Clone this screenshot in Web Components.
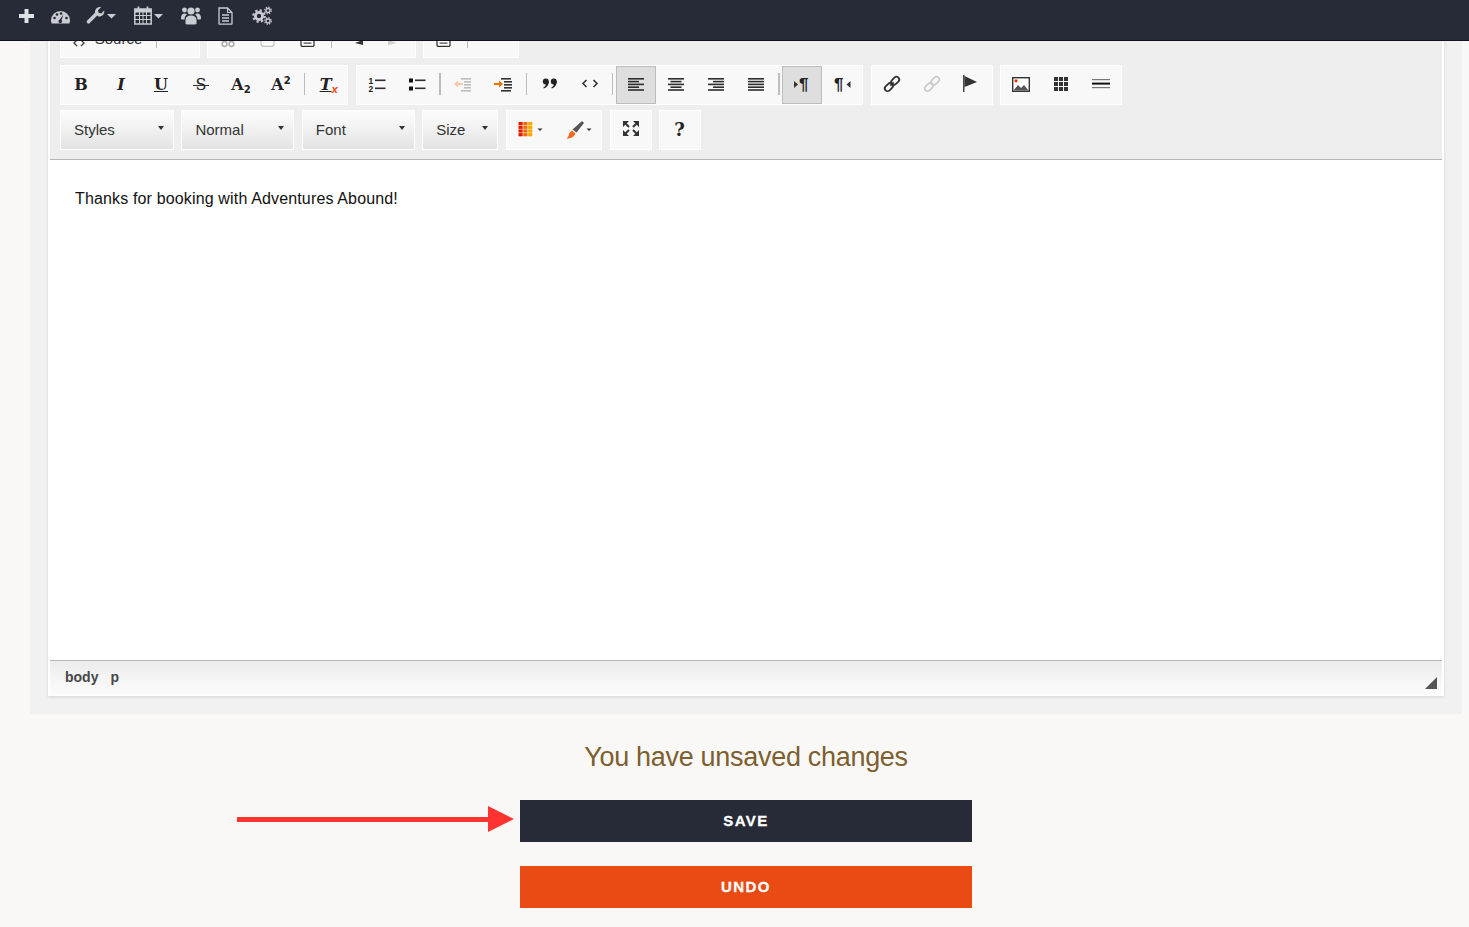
<!DOCTYPE html>
<html>
<head>
<meta charset="utf-8">
<title>Email editor</title>
<style>
  html, body { margin: 0; height: 100%; overflow: hidden; background: #faf8f6; font-family: "Liberation Sans", Arial, sans-serif; }
</style>
</head>
<body>
<admin-topbar>
  <top-icon name="plus" w="15"></top-icon>
  <top-icon name="gauge" w="19"></top-icon>
  <top-icon name="wrench" w="30"></top-icon>
  <top-icon name="calendar" w="30"></top-icon>
  <top-icon name="users" w="20"></top-icon>
  <top-icon name="doc" w="15"></top-icon>
  <top-icon name="cogs" w="22"></top-icon>
</admin-topbar>

<editor-panel>
  <rich-editor>
    <ck-toolbar>
      <ck-row kind="tight">
        <ck-group width="140">
          <ck-btn width="92"><ck-icon name="source"></ck-icon><ck-label>Source</ck-label></ck-btn><ck-sep></ck-sep>
        </ck-group>
        <ck-group width="209">
          <ck-btn><ck-icon name="cut"></ck-icon></ck-btn>
          <ck-btn><ck-icon name="copy"></ck-icon></ck-btn>
          <ck-btn><ck-icon name="paste"></ck-icon></ck-btn><ck-sep></ck-sep>
          <ck-btn><ck-icon name="undo"></ck-icon></ck-btn>
          <ck-btn><ck-icon name="redo"></ck-icon></ck-btn>
        </ck-group>
        <ck-group width="96">
          <ck-btn><ck-icon name="paste"></ck-icon></ck-btn><ck-sep></ck-sep>
        </ck-group>
      </ck-row>

      <ck-row>
        <ck-group>
          <ck-btn><ck-glyph kind="b">B</ck-glyph></ck-btn>
          <ck-btn><ck-glyph kind="i">I</ck-glyph></ck-btn>
          <ck-btn><ck-glyph kind="u">U</ck-glyph></ck-btn>
          <ck-btn><ck-glyph kind="s">S</ck-glyph></ck-btn>
          <ck-btn><ck-glyph kind="b">A<sub>2</sub></ck-glyph></ck-btn>
          <ck-btn><ck-glyph kind="b">A<sup>2</sup></ck-glyph></ck-btn><ck-sep></ck-sep>
          <ck-btn><ck-glyph kind="tx"><u>T</u><sub>x</sub></ck-glyph></ck-btn>
        </ck-group>
        <ck-group>
          <ck-btn><ck-icon name="ol"></ck-icon></ck-btn>
          <ck-btn><ck-icon name="ul"></ck-icon></ck-btn><ck-sep></ck-sep>
          <ck-btn><ck-icon name="outdent"></ck-icon></ck-btn>
          <ck-btn><ck-icon name="indent"></ck-icon></ck-btn><ck-sep></ck-sep>
          <ck-btn><ck-icon name="quote"></ck-icon></ck-btn>
          <ck-btn><ck-icon name="code"></ck-icon></ck-btn><ck-sep></ck-sep>
          <ck-btn active><ck-icon name="left"></ck-icon></ck-btn>
          <ck-btn><ck-icon name="center"></ck-icon></ck-btn>
          <ck-btn><ck-icon name="right"></ck-icon></ck-btn>
          <ck-btn><ck-icon name="justify"></ck-icon></ck-btn><ck-sep></ck-sep>
          <ck-btn active><ck-icon name="ltr"></ck-icon></ck-btn>
          <ck-btn><ck-icon name="rtl"></ck-icon></ck-btn>
        </ck-group>
        <ck-group>
          <ck-btn><ck-icon name="link"></ck-icon></ck-btn>
          <ck-btn><ck-icon name="unlink"></ck-icon></ck-btn>
          <ck-btn><ck-icon name="flag"></ck-icon></ck-btn>
        </ck-group>
        <ck-group>
          <ck-btn><ck-icon name="image"></ck-icon></ck-btn>
          <ck-btn><ck-icon name="table"></ck-icon></ck-btn>
          <ck-btn><ck-icon name="rule"></ck-icon></ck-btn>
        </ck-group>
      </ck-row>

      <ck-row kind="combos">
        <ck-combo width="114">Styles</ck-combo>
        <ck-combo width="113">Normal</ck-combo>
        <ck-combo width="113">Font</ck-combo>
        <ck-combo width="76">Size</ck-combo>
        <ck-group width="96.6">
          <ck-btn width="47"><ck-icon name="textcolor" w="28"></ck-icon></ck-btn>
          <ck-btn width="47"><ck-icon name="brush" w="28"></ck-icon></ck-btn>
        </ck-group>
        <ck-group width="42"><ck-btn><ck-icon name="maximize"></ck-icon></ck-btn></ck-group>
        <ck-group width="42"><ck-btn><ck-glyph kind="help">?</ck-glyph></ck-btn></ck-group>
      </ck-row>
    </ck-toolbar>
    <ck-content>Thanks for booking with Adventures Abound!</ck-content>
    <ck-status><span>body</span><span>p</span></ck-status>
  </rich-editor>
</editor-panel>

<save-footer>
  <span slot="message">You have unsaved changes</span>
  <save-button tone="dark" pointer>SAVE</save-button>
  <save-button tone="orange">UNDO</save-button>
</save-footer>

<script>
const DARK = "#2d2d2d";
const line = (x, y, w, h, c) => `<rect x="${x}" y="${y}" width="${w}" height="${h}" fill="${c || DARK}"/>`;
const lines = (rows, c) => rows.map(r => line(r[0], r[1], r[2], r.length > 3 ? r[3] : 1.6, c)).join("");
const ROWS = [4, 6.8, 9.6, 12.4, 15.2];
const align = xs => lines(ROWS.map((y, i) => [xs[i % 2][0], y, xs[i % 2][1]]));

// toolbar icons, all on a 20x20 box unless the element says otherwise
const CK_ICONS = {
  source: `<path d="M5 13l-3 3 3 3M9 13l3 3-3 3" fill="none" stroke="#444" stroke-width="1.4"/>`,
  cut: `<circle cx="6.500" cy="17" r="2.400" fill="none" stroke="#aaa" stroke-width="1.500"/><circle cx="13.500" cy="17" r="2.400" fill="none" stroke="#aaa" stroke-width="1.500"/>`,
  copy: `<rect x="3" y="5" width="13" height="14.300" rx="2.500" fill="none" stroke="#c4c4c4" stroke-width="1.300"/>`,
  paste: `<rect x="3" y="6" width="13" height="13.300" rx="1" fill="#fff" stroke="#333" stroke-width="1.300"/>${lines([[5.500,12.500,8,1.200],[5.500,15.500,8,1.200]], "#444")}`,
  undo: `<path d="M11 16l8-3v5z" fill="#333"/>`,
  redo: `<path d="M13 16l-9-3v5z" fill="#cfcfcf"/>`,
  ol: `<text x="1.500" y="9.500" font-family="Liberation Sans" font-weight="700" font-size="8.500" fill="#222">1</text><text x="1.500" y="18" font-family="Liberation Sans" font-weight="700" font-size="8.500" fill="#222">2</text>${lines([[8,5.500,10.500],[8,13.500,10.500]])}`,
  ul: `${line(2,4.500,4,4,"#111")}${line(2,12.500,4,4,"#111")}${lines([[8,5.500,10.500],[8,13.500,10.500]])}`,
  outdent: `<path d="M1 10l4-3.500V9h5v2H5v2.500z" fill="#f9c8a8"/>${lines([[8,4,10],[11,7,7],[11,10,7],[11,13,7],[8,16,10]], "#bdbdbd")}`,
  indent: `<path d="M10 10L6 6.500V9H1v2h5v2.500z" fill="#f07000"/>${lines([[8,4,10],[11,7,8],[11,10,8],[11,13,8],[8,16,10]], "#333")}`,
  quote: `<g fill="#222"><circle cx="5.800" cy="7.500" r="3"/><path d="M8.800 7.500c0 3.500-2 6-5 7l-.5-1c2-1 2.700-2.500 2.700-4z"/><circle cx="13.800" cy="7.500" r="3"/><path d="M16.800 7.500c0 3.500-2 6-5 7l-.5-1c2-1 2.700-2.500 2.700-4z"/></g>`,
  code: `<path d="M6.500 6L3 9.500l3.500 3.500M13.500 6L17 9.500 13.500 13" fill="none" stroke="#333" stroke-width="1.600"/>`,
  left: align([[2,16],[2,11]]),
  center: align([[2,16],[4.500,11]]),
  right: align([[2,16],[7,11]]),
  justify: align([[2,16],[2,16]]),
  ltr: `<path d="M2 7l4 3.500-4 3.500z" fill="#333"/><text x="7" y="16" font-family="Liberation Sans" font-weight="700" font-size="17" fill="#222">¶</text>`,
  rtl: `<path d="M18.500 7l-4 3.500 4 3.500z" fill="#333"/><text x="2" y="16" font-family="Liberation Sans" font-weight="700" font-size="17" fill="#222">¶</text>`,
  link: `<g fill="none" stroke="#333" stroke-width="1.800"><rect x="8.700" y="4" width="9" height="5.600" rx="2.800" transform="rotate(-45 13.200 6.800)"/><rect x="2.300" y="10.400" width="9" height="5.600" rx="2.800" transform="rotate(-45 6.800 13.200)"/><path d="M8.300 11.700l3.400-3.400"/></g>`,
  unlink: `<g fill="none" stroke="#cbcbcb" stroke-width="1.800"><rect x="8.700" y="4" width="9" height="5.600" rx="2.800" transform="rotate(-45 13.200 6.800)"/><rect x="2.300" y="10.400" width="9" height="5.600" rx="2.800" transform="rotate(-45 6.800 13.200)"/></g>`,
  flag: `${line(1,1,1.500,17,"#444")}<path d="M2.500 2L15 8 2.500 13z" fill="#333"/>`,
  image: `<rect x="1.700" y="3.700" width="16.600" height="13.600" fill="#fff" stroke="#333" stroke-width="1.400"/><circle cx="5" cy="6.800" r="1.600" fill="#f33000"/><path d="M2.500 16.500l4.500-5.500 3 3 3-3 4.500 5.500z" fill="#555"/>`,
  table: [3,8,13].map(x => [3,8,13].map(y => line(x, y, 4, 4, "#333")).join("")).join(""),
  rule: `${line(1,5,18,1.200,"#777")}${line(1,8.600,18,2,"#111")}${line(1,13,18,1.200,"#777")}`,
  textcolor: [0,1,2,3].map(r => [0,1,2].map(c => line(2.500 + c * 4.800, 3 + r * 3.700, 4.200, 3.200, ["#e01b00","#f06a00","#f9a800"][c])).join("")).join("") + `<path d="M21.500 9.500h5l-2.500 2.600z" fill="#333"/>`,
  brush: `<path d="M19 2l2 2-7.500 9.500-4-3z" fill="#555"/><path d="M9 11.500l3.500 3c-1 3-4.500 5-9 5.300 2-1.500 2-3.800 3-5.800.5-1 1.500-1.800 2.500-2.500z" fill="#f26a1b"/><path d="M23.500 9.500h5l-2.500 2.600z" fill="#333"/>`,
  maximize: `<g fill="#333"><path d="M2 2h6L2 8zM18 2v6l-6-6zM2 17v-6l6 6zM18 17h-6l6-6z"/></g><path d="M4.500 4.500L8 8M15.500 4.500L12 8M4.500 14.500L8 11M15.500 14.500L12 11" stroke="#333" stroke-width="2"/>`
};

// dark top bar icons
const ICON_TINT = "#c9ccd2", BAR = "#272b37";
const caret = x => `<path d="M${x} 14h9l-4.500 4.500z" fill="${ICON_TINT}"/>`;
const TOP_ICONS = {
  plus: `<path d="M5.500 9h4v5h5.500v4H9.500v5h-4v-5H0v-4h5.500z" fill="#dfe1e4"/>`,
  gauge: `<path d="M0 20.500a9.500 9.500 0 0 1 19 0c0 1-.3 2.200-.7 3H.7C.3 22.700 0 21.500 0 20.500z" fill="${ICON_TINT}"/><circle cx="3.500" cy="18" r="1.300" fill="${BAR}"/><circle cx="6" cy="14.500" r="1.300" fill="${BAR}"/><circle cx="10" cy="13.500" r="1.300" fill="${BAR}"/><circle cx="15.500" cy="18" r="1.300" fill="${BAR}"/><path d="M12.500 14.500l-2 5.500a1.800 1.800 0 1 1-2-.3z" fill="${BAR}"/>`,
  wrench: `<path d="M1.500 21.800L9.500 13.800" stroke="${ICON_TINT}" stroke-width="3.600" stroke-linecap="round"/><path d="M8 13c-.6-3.500 2.500-6.500 6-5.800l-3 3 .6 2.600 2.600.6 3-3c.7 3.500-2.300 6.600-5.800 6z" fill="${ICON_TINT}"/>${caret(20)}`,
  calendar: `<rect x=".8" y="9" width="16.400" height="15" fill="none" stroke="${ICON_TINT}" stroke-width="1.500"/><path d="M1 9h16v3.500H1z" fill="${ICON_TINT}"/><path d="M5.500 12v12M9 12v12M12.500 12v12M1 15.500h16M1 19.500h16" stroke="${ICON_TINT}" stroke-width="1"/><path d="M4.500 6.500v3.500M13.500 6.500v3.500" stroke="${ICON_TINT}" stroke-width="1.800"/>${caret(20)}`,
  users: `<g fill="${ICON_TINT}"><circle cx="10" cy="11" r="3.600"/><circle cx="3.500" cy="10" r="2.400"/><circle cx="16.500" cy="10" r="2.400"/><path d="M4.500 24v-4c0-3 2-4.500 5.500-4.500s5.500 1.500 5.500 4.500v4c-1 .7-10 .7-11 0z"/><path d="M0 18c0-3 1.500-4.500 3.500-4.500 1 0 1.800 .3 2.400 .9-1.500 1-2.400 2.700-2.400 5.100H1c-.7 0-1-.6-1-1.500zM20 18c0-3-1.500-4.500-3.500-4.500-1 0-1.800 .3-2.400 .9 1.500 1 2.400 2.700 2.400 5.100H19c.7 0 1-.6 1-1.500z"/></g>`,
  doc: `<path d="M1 8h8.500L14 12.500V23.500a.7 .7 0 0 1-.7 .7H1.700a.7 .7 0 0 1-.7-.7z" fill="none" stroke="${ICON_TINT}" stroke-width="1.300"/><path d="M9.500 8v4.500H14" fill="none" stroke="${ICON_TINT}" stroke-width="1.100"/><path d="M4 15h7M4 18h7M4 21h7" stroke="${ICON_TINT}" stroke-width="1.300"/>`,
  cogs: `<g fill="none" stroke="${ICON_TINT}"><circle cx="9" cy="16" r="3.600" stroke-width="2.800"/><circle cx="9" cy="16" r="5.800" stroke-width="2" stroke-dasharray="2.300 2.250"/><circle cx="18" cy="10.500" r="2" stroke-width="1.300"/><circle cx="18" cy="10.500" r="3.300" stroke-width="1.300" stroke-dasharray="1.300 1.300"/><circle cx="18" cy="21" r="2" stroke-width="1.300"/><circle cx="18" cy="21" r="3.300" stroke-width="1.300" stroke-dasharray="1.300 1.300"/></g>`
};

// small helper so every element below stays a few lines long
function define(tag, css, html, setup) {
  customElements.define(tag, class extends HTMLElement {
    constructor() {
      super();
      this.attachShadow({ mode: "open" });
    }
    connectedCallback() {
      this.shadowRoot.innerHTML = `<style>${css}</style>${typeof html === "function" ? html(this) : html}`;
      if (setup) setup(this);
    }
  });
}

define("admin-topbar", `
  :host { position: fixed; top: 0; left: 0; right: 0; height: 40px; z-index: 5; display: flex; align-items: flex-start; gap: 17px; padding-left: 19px; background: #272b37; border-bottom: 1px solid #11131a; }
`, `<slot></slot>`);

define("top-icon", `:host { display: block; height: 30px; } svg { display: block; overflow: visible; }`,
  el => `<svg width="${el.getAttribute("w")}" height="30" viewBox="0 0 ${el.getAttribute("w")} 30">${TOP_ICONS[el.getAttribute("name")]}</svg>`);

define("editor-panel", `
  :host { display: block; margin: 0 7px 0 30px; padding: 0 18px 18px; background: #f1f1f1; }
`, `<slot></slot>`);

define("rich-editor", `
  :host { display: block; background: #fff; border: solid #fff; border-width: 0 2px 1px; box-shadow: 0 1px 3px rgba(0,0,0,.12); }
`, `<slot></slot>`);

define("ck-toolbar", `
  :host { display: flex; flex-direction: column; gap: 5px; padding: 18px 10px 9px; background: #eee; border-bottom: 1px solid #b6b6b6; }
`, `<slot></slot>`);

define("ck-row", `
  :host { display: flex; gap: 7.6px; }
  :host([kind="tight"]) { margin-bottom: 2px; gap: 7px; }
  :host([kind="combos"]) { gap: 7.4px; }
`, `<slot></slot>`);

define("ck-group", `
  :host { display: flex; box-sizing: border-box; height: 40px; background: #f8f8f8; border: 1px solid #fff; }
`, `<slot></slot>`, el => { if (el.getAttribute("width")) el.style.width = el.getAttribute("width") + "px"; });

define("ck-btn", `
  :host { display: flex; align-items: center; justify-content: center; gap: 5px; box-sizing: border-box; flex: none; width: 40px; height: 38px; }
  :host([active]) { background: #dedede; box-shadow: inset 0 0 0 1px #bcbcbc; }
`, `<slot></slot>`, el => { if (el.getAttribute("width")) el.style.width = el.getAttribute("width") + "px"; });

define("ck-sep", `
  :host { display: block; flex: none; width: 1.3px; height: 22px; margin: 7px 2.52px 0; background: #bcbcbc; }
`, ``);

define("ck-icon", `:host { display: block; line-height: 0; margin-bottom: 2px; } svg { display: block; overflow: visible; }`,
  el => {
    const w = el.getAttribute("w") || 20;
    return `<svg width="${w}" height="20" viewBox="0 0 ${w} 20">${CK_ICONS[el.getAttribute("name")]}</svg>`;
  });

define("ck-label", `:host { font-size: 15px; color: #333; margin: 1px 0 0 -2px; }`, `<slot></slot>`);

// B I U S and friends are real letters in a slab serif
define("ck-glyph", `
  :host { position: relative; display: block; font: 700 16px "DejaVu Serif", "Liberation Serif", serif; color: #222; line-height: 20px; white-space: nowrap; }
  :host([kind="i"]) { font-style: italic; }
  :host([kind="u"]) { text-decoration: underline; }
  :host([kind="s"]) { font-weight: 400; }
  :host([kind="s"])::after { content: ""; position: absolute; left: -3px; right: -3px; top: 10px; height: 1.3px; background: #333; }
  :host([kind="tx"]) { font-style: italic; margin-left: 3px; }
  :host([kind="help"]) { font-size: 18px; margin-right: 1px; }
  ::slotted(sub), ::slotted(sup) { font: 700 10px "DejaVu Sans", sans-serif; line-height: 0; }
  ::slotted(sup) { vertical-align: 6px; }
  ::slotted(sub) { vertical-align: -3px; }
  :host([kind="tx"]) ::slotted(sub) { color: #f0552a; font-style: italic; }
`, `<slot></slot>`);

define("ck-combo", `
  :host { display: flex; align-items: center; box-sizing: border-box; height: 40px; padding: 0 9px 2px 13px; background: linear-gradient(#fdfdfd, #e3e3e3); border: 1px solid #fff; font-size: 15px; color: #333; }
  span { flex: 1; }
  i { margin-bottom: 2px; border: 3px solid transparent; border-top: 4px solid #333; border-bottom: 0; }
`, `<span><slot></slot></span><i></i>`, el => { el.style.width = el.getAttribute("width") + "px"; });

define("ck-content", `
  :host { display: block; box-sizing: border-box; height: 500px; padding: 29px 25px; background: #fff; font-size: 16px; line-height: 20px; letter-spacing: .15px; color: #111; }
`, `<slot></slot>`);

define("ck-status", `
  :host { position: relative; display: flex; gap: 12px; box-sizing: border-box; height: 35px; padding: 8px 15px 0; border-top: 1px solid #b6b6b6; background: linear-gradient(#ececec, #fcfcfc); font-size: 14px; font-weight: 700; line-height: 16px; color: #484848; }
  i { position: absolute; right: 5px; bottom: 6px; width: 12px; height: 12px; background: #555; clip-path: polygon(100% 0, 100% 100%, 0 100%); }
`, `<slot></slot><i></i>`);

define("save-footer", `
  :host { display: flex; flex-direction: column; align-items: center; gap: 24px; margin: 0 7px 0 30px; padding-top: 27px; }
  h2 { margin: 0 0 3px; font-size: 27px; font-weight: 400; line-height: 32px; letter-spacing: -.3px; color: #7d5f30; }
`, `<h2><slot name="message"></slot></h2><slot></slot>`);

define("save-button", `
  :host { position: relative; display: flex; align-items: center; justify-content: center; box-sizing: border-box; width: 452px; height: 42px; padding-bottom: 2px; font-size: 15px; font-weight: 700; letter-spacing: 1.4px; color: #fff; -webkit-text-stroke: .3px #fff; }
  :host([tone="dark"]) { background: #272b37; }
  :host([tone="orange"]) { background: #ea4b14; }
  svg { position: absolute; left: -283px; top: 6px; }
`, el => `<slot></slot>${el.hasAttribute("pointer") ? `<svg width="277" height="26" viewBox="0 0 277 26"><path d="M0 11h251V0l26 13-26 13V16H0z" fill="#ff3430"/></svg>` : ""}`);
</script>
</body>
</html>
